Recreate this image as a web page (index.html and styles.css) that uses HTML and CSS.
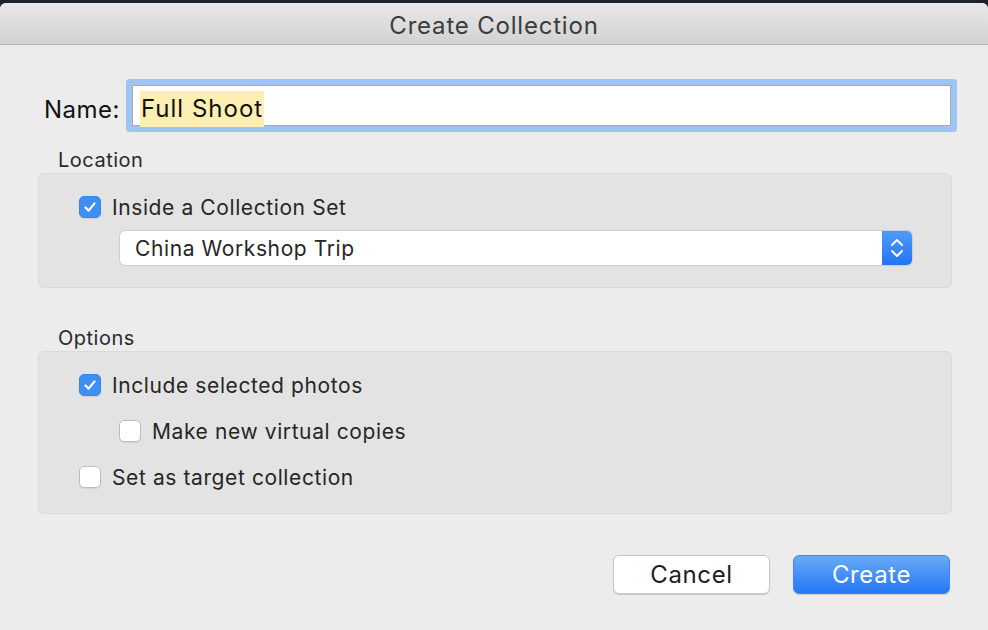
FILE: index.html
```html
<!DOCTYPE html>
<html lang="en">
<head>
    <meta charset="UTF-8">
    <title>Create Collection</title>
    <link rel="stylesheet" href="styles.css">
</head>
<body>
    <div class="window">
        <div class="titlebar">Create Collection</div>
        <div class="content">
            <div class="name-row">
                <label class="name-label">Name:</label>
                <div class="name-field"><span class="selected">Full Shoot</span></div>
            </div>

            <div class="section-title">Location</div>
            <div class="group group-location">
                <div class="check-row">
                    <span class="checkbox checked"><svg viewBox="0 0 22 22"><path d="M6 11.5 L9.5 15 L16 7" /></svg></span>
                    <span>Inside a Collection Set</span>
                </div>
                <div class="popup">
                    <span class="popup-text">China Workshop Trip</span>
                    <span class="stepper"><svg viewBox="0 0 30 34"><path d="M10 14 L15 9 L20 14 M10 20 L15 25 L20 20" /></svg></span>
                </div>
            </div>

            <div class="section-title section-options">Options</div>
            <div class="group group-options">
                <div class="check-row">
                    <span class="checkbox checked"><svg viewBox="0 0 22 22"><path d="M6 11.5 L9.5 15 L16 7" /></svg></span>
                    <span>Include selected photos</span>
                </div>
                <div class="check-row indent">
                    <span class="checkbox"></span>
                    <span>Make new virtual copies</span>
                </div>
                <div class="check-row">
                    <span class="checkbox"></span>
                    <span>Set as target collection</span>
                </div>
            </div>

            <div class="buttons">
                <button class="btn">Cancel</button>
                <button class="btn btn-primary">Create</button>
            </div>
        </div>
    </div>
</body>
</html>
```

FILE: styles.css
```css
body {
    margin: 0;
    background: #1d222c;
    font-family: Inter, "Noto Sans", sans-serif;
    color: #262626;
    height: 630px;
    overflow: hidden;
}

.window {
    margin-top: 3px;
    background: #ececec;
    border-radius: 6px 6px 0 0;
    height: 627px;
    overflow: hidden;
}

.titlebar {
    height: 41px;
    line-height: 45px;
    text-align: center;
    font-size: 24px;
    letter-spacing: 0.8px;
    color: #3c3c3c;
    background: linear-gradient(#e8e8e8, #d2d2d2);
    border-bottom: 1px solid #b5b5b5;
}

.content {
    padding: 40px 36px 0 38px;
}

.name-row {
    display: flex;
    align-items: center;
}

.name-label {
    font-size: 24px;
    letter-spacing: 0.5px;
    color: #111;
    margin-left: 6px;
    width: 88px;
    padding-top: 8px;
}

.name-field {
    flex: 1;
    height: 41px;
    box-sizing: border-box;
    background: #fff;
    border: 1px solid #a8a8a8;
    box-shadow: 0 0 0 6px #9ec4f3;
    border-radius: 1px;
    margin-right: 1px;
    display: flex;
    align-items: center;
    padding: 7px 0 0 7px;
}

.selected {
    background: #fdeeb2;
    font-size: 24px;
    letter-spacing: 1px;
    color: #111;
    padding: 3px 1px 4px 1px;
}

.section-title {
    font-size: 20px;
    letter-spacing: 0.5px;
    margin: 22px 0 1px 20px;
    color: #2a2a2a;
}

.section-options {
    margin-top: 38px;
}

.group {
    background: #e3e3e3;
    border: 1px solid #dadada;
    border-radius: 6px;
    padding: 21px 0 0 40px;
}

.group-location {
    height: 92px;
}

.group-options {
    height: 140px;
}

.check-row {
    display: flex;
    align-items: center;
    gap: 11px;
    font-size: 21px;
    letter-spacing: 0.6px;
    height: 24px;
    margin-bottom: 22px;
}

.check-row.indent {
    margin-left: 40px;
}

.checkbox {
    width: 22px;
    height: 22px;
    box-sizing: border-box;
    border-radius: 5px;
    background: #fff;
    border: 1px solid #bdbdbd;
    box-shadow: 0 1px 1px rgba(0, 0, 0, 0.08);
}

.checkbox.checked {
    background: #3d8ff3;
    border-color: #3a86e8;
}

.checkbox svg {
    display: block;
    width: 20px;
    height: 20px;
    fill: none;
    stroke: #fff;
    stroke-width: 2.4;
    stroke-linecap: round;
    stroke-linejoin: round;
}

.popup {
    display: flex;
    margin: -10px 0 0 41px;
    width: 792px;
    height: 34px;
    box-sizing: border-box;
    background: #fff;
    border-radius: 5px;
    box-shadow: 0 0 0 1px #cfcfcf, 0 1px 1px rgba(0, 0, 0, 0.12);
    align-items: center;
}

.popup-text {
    flex: 1;
    font-size: 21px;
    letter-spacing: 0.6px;
    padding-left: 15px;
}

.stepper {
    width: 30px;
    height: 34px;
    background: linear-gradient(#4e9cf8, #2374f5);
    border-radius: 0 5px 5px 0;
}

.stepper svg {
    display: block;
    width: 30px;
    height: 34px;
    fill: none;
    stroke: #fff;
    stroke-width: 2;
    stroke-linecap: round;
    stroke-linejoin: round;
}

.buttons {
    display: flex;
    justify-content: flex-end;
    gap: 23px;
    margin-top: 41px;
    padding-right: 2px;
}

.btn {
    width: 157px;
    height: 39px;
    border-radius: 6px;
    font-family: Inter, "Noto Sans", sans-serif;
    font-size: 24px;
    letter-spacing: 0.6px;
    color: #1e1e1e;
    background: #fff;
    border: 1px solid #c6c6c6;
    box-shadow: 0 1px 1px rgba(0, 0, 0, 0.15);
}

.btn-primary {
    color: #fff;
    background: linear-gradient(#69aaf8, #2377f5);
    border-color: #3f8ae8;
}
```
